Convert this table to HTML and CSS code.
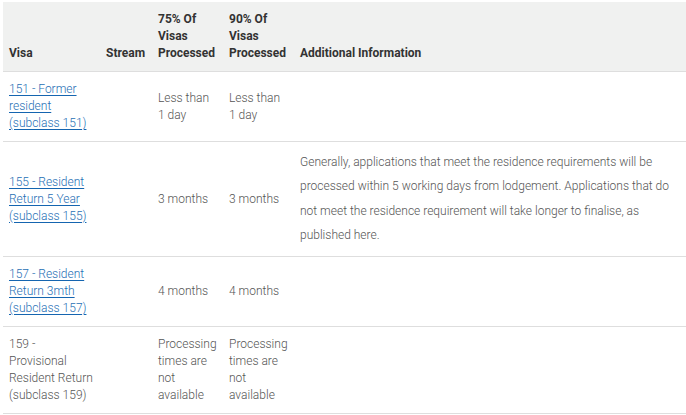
FILE: index.html
```html
<!DOCTYPE html>
<html lang="en">
<head>
<meta charset="utf-8">
<title>Visa processing times</title>
<link rel="stylesheet" href="styles.css">
</head>
<body>
<table class="times">
  <colgroup>
    <col class="c-visa">
    <col class="c-stream">
    <col class="c-pct">
    <col class="c-pct">
    <col>
  </colgroup>
  <thead>
    <tr>
      <th>Visa</th>
      <th>Stream</th>
      <th>75% Of Visas Processed</th>
      <th>90% Of Visas Processed</th>
      <th>Additional Information</th>
    </tr>
  </thead>
  <tbody>
    <tr>
      <td><a href="#">151 - Former resident (subclass 151)</a></td>
      <td></td>
      <td>Less than 1 day</td>
      <td>Less than 1 day</td>
      <td></td>
    </tr>
    <tr>
      <td><a href="#">155 - Resident Return 5 Year (subclass 155)</a></td>
      <td></td>
      <td>3 months</td>
      <td>3 months</td>
      <td><p class="info">Generally, applications that meet the residence requirements will be processed within 5 working days from lodgement. Applications that do not meet the residence requirement will take longer to finalise, as published here.</p></td>
    </tr>
    <tr>
      <td><a href="#">157 - Resident Return 3mth (subclass 157)</a></td>
      <td></td>
      <td>4 months</td>
      <td>4 months</td>
      <td></td>
    </tr>
    <tr>
      <td>159 - Provisional Resident Return (subclass 159)</td>
      <td></td>
      <td>Processing times are not available</td>
      <td>Processing times are not available</td>
      <td></td>
    </tr>
  </tbody>
</table>
</body>
</html>
```
FILE: styles.css
```css
html, body {
  margin: 0;
  padding: 0;
  background: #ffffff;
}
body {
  padding: 2px 0 0 3px;
  font-family: Roboto, "Liberation Sans", sans-serif;
  font-size: 12px;
  color: #555555;
}
.times {
  width: 683px;
  border-collapse: collapse;
  table-layout: fixed;
}
.c-visa { width: 97px; }
.c-stream { width: 52px; }
.c-pct { width: 71px; }
.times th,
.times td {
  padding: 9px 6px;
  line-height: 17px;
  text-align: left;
  vertical-align: middle;
  border-bottom: 1px solid #dedede;
}
.times th {
  vertical-align: bottom;
  background: #f0f1f0;
  color: #333333;
  font-weight: 700;
}
.times td {
  font-weight: 300;
}
.times a {
  color: #1f6fb5;
  text-decoration: underline;
  text-decoration-color: #1565b0;
  text-underline-offset: 2px;
}
.info {
  margin: -1px 0 0;
  line-height: 24.3px;
}
```
